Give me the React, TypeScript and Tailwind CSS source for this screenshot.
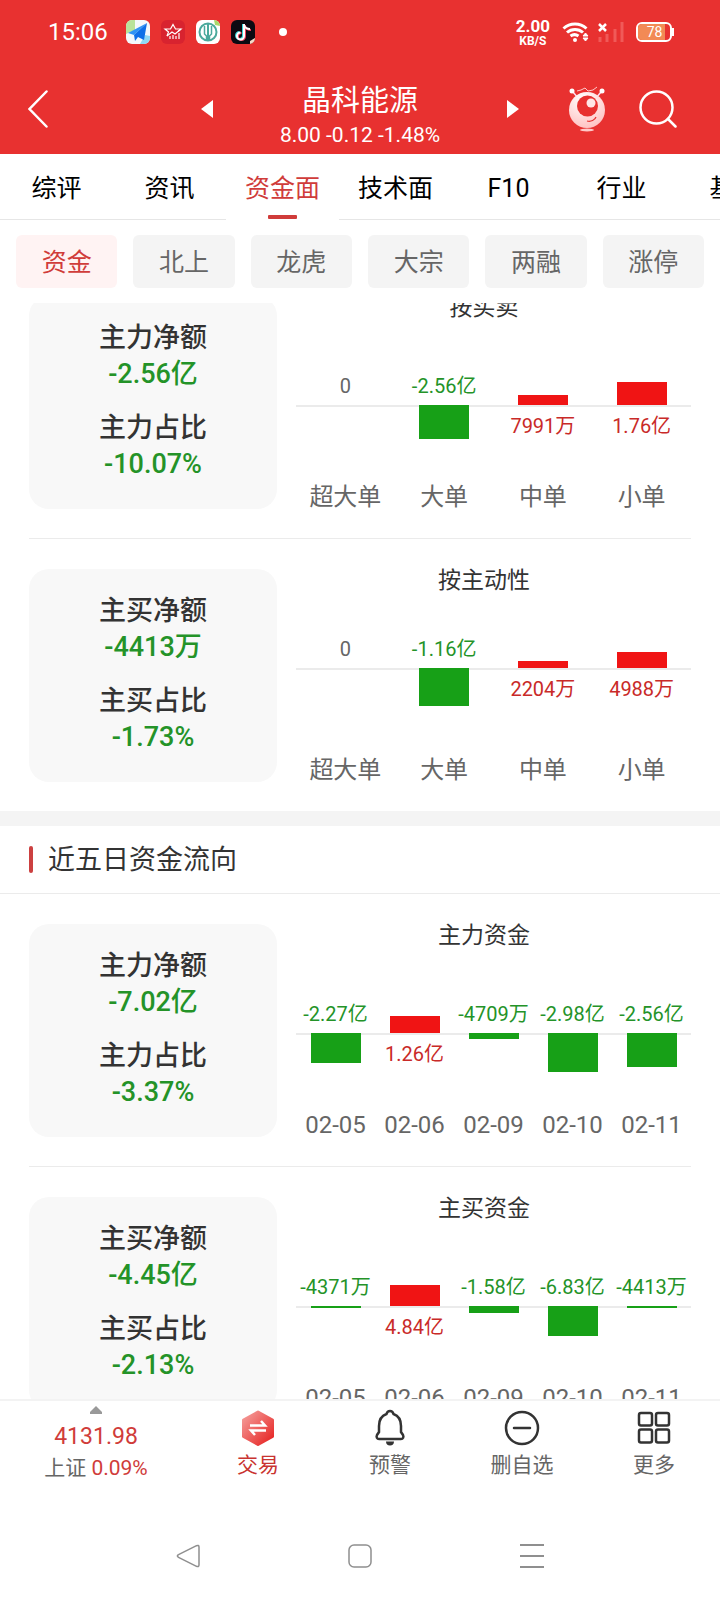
import { ReactNode } from "react";
import clsx from "clsx";

type Bar = { label: string; value: string; height: number; dir: "up" | "down" | "none" };

type Flow = {
	netLabel: string;
	net: string;
	ratioLabel: string;
	ratio: string;
	title: string;
	axis: "high" | "low";
	bars: Bar[];
};

const tabs = ["综评", "资讯", "资金面", "技术面", "F10", "行业", "基金"];
const chips = ["资金", "北上", "龙虎", "大宗", "两融", "涨停"];

const today: Flow[] = [
	{
		netLabel: "主力净额",
		net: "-2.56亿",
		ratioLabel: "主力占比",
		ratio: "-10.07%",
		title: "按买卖",
		axis: "low",
		bars: [
			{ label: "超大单", value: "0", height: 0, dir: "none" },
			{ label: "大单", value: "-2.56亿", height: 34, dir: "down" },
			{ label: "中单", value: "7991万", height: 10, dir: "up" },
			{ label: "小单", value: "1.76亿", height: 23, dir: "up" },
		],
	},
	{
		netLabel: "主买净额",
		net: "-4413万",
		ratioLabel: "主买占比",
		ratio: "-1.73%",
		title: "按主动性",
		axis: "high",
		bars: [
			{ label: "超大单", value: "0", height: 0, dir: "none" },
			{ label: "大单", value: "-1.16亿", height: 38, dir: "down" },
			{ label: "中单", value: "2204万", height: 7, dir: "up" },
			{ label: "小单", value: "4988万", height: 16, dir: "up" },
		],
	},
];

const fiveDays: Flow[] = [
	{
		netLabel: "主力净额",
		net: "-7.02亿",
		ratioLabel: "主力占比",
		ratio: "-3.37%",
		title: "主力资金",
		axis: "low",
		bars: [
			{ label: "02-05", value: "-2.27亿", height: 30, dir: "down" },
			{ label: "02-06", value: "1.26亿", height: 17, dir: "up" },
			{ label: "02-09", value: "-4709万", height: 6, dir: "down" },
			{ label: "02-10", value: "-2.98亿", height: 39, dir: "down" },
			{ label: "02-11", value: "-2.56亿", height: 34, dir: "down" },
		],
	},
	{
		netLabel: "主买净额",
		net: "-4.45亿",
		ratioLabel: "主买占比",
		ratio: "-2.13%",
		title: "主买资金",
		axis: "low",
		bars: [
			{ label: "02-05", value: "-4371万", height: 2, dir: "down" },
			{ label: "02-06", value: "4.84亿", height: 21, dir: "up" },
			{ label: "02-09", value: "-1.58亿", height: 7, dir: "down" },
			{ label: "02-10", value: "-6.83亿", height: 30, dir: "down" },
			{ label: "02-11", value: "-4413万", height: 2, dir: "down" },
		],
	},
];

function AppIcons() {
	return (
		<div className="flex gap-[11px]">
			{/* 地图 */}
			<svg className="size-6" viewBox="0 0 24 24">
				<rect width="24" height="24" rx="6" fill="#f4f8fb" />
				<path d="M6 0h3v10L0 14V6a6 6 0 0 1 6-6z" fill="#b9e39a" />
				<path d="M14 24l5-9 5 1v2a6 6 0 0 1-6 6z" fill="#8fd8f5" />
				<path d="M21 3L2 13l6 2z" fill="#2f93f5" />
				<path d="M21 3L8 15l1 6 3-4 6 3z" fill="#0f6fe8" />
			</svg>
			{/* 券商 */}
			<svg className="size-6" viewBox="0 0 24 24" fill="none" stroke="#fff" strokeWidth="1.2">
				<rect width="24" height="24" rx="6" fill="#d8232f" stroke="none" />
				<path d="M6 16l1.500-4L4 9h5.500L12 4.500 14.500 9H20l-3 2.500" />
				<path d="M6 16l5-4 3 2 6-5M9 19v-3M12 19v-4M15 19v-3M18 19v-6" />
			</svg>
			{/* 银行 */}
			<svg className="size-6" viewBox="0 0 24 24" fill="none" stroke="#4ba99c">
				<rect width="24" height="24" rx="6" fill="#fff" stroke="none" />
				<path d="M18 0a6 6 0 0 1 6 6l-5-1z" fill="#a8d86a" stroke="none" />
				<circle cx="12" cy="12" r="8.500" strokeWidth="2" />
				<path d="M12 4v16" strokeWidth="2" />
				<path d="M8.500 6v8l2 2v4M15.500 6v8l-2 2v4" strokeWidth="1.500" />
			</svg>
			{/* 短视频 */}
			<svg className="size-6" viewBox="0 0 24 24" fill="none" strokeWidth="2">
				<rect width="24" height="24" rx="6" fill="#0c0a12" />
				<path d="M12 4v11.500a3.500 3.500 0 1 1-3.500-3.500M12 5c1 3 3 4 6 4" stroke="#35d6d8" />
				<path d="M14 5v11.500a3.500 3.500 0 1 1-3.500-3.500M14 6c1 3 3 4 6 4" stroke="#f0405c" />
				<path d="M13 4v12a3.500 3.500 0 1 1-3.500-3.500M13 5c1 3 3 4 6 4" stroke="#fff" />
				<path d="M19 21l5-3a6 6 0 0 1-5 6z" fill="#f6d9c8" />
			</svg>
		</div>
	);
}

function StatusBar() {
	return (
		<div className="flex h-16 items-center pr-[46px] pl-12">
			<span className="w-[78px] text-[24px] leading-8">15:06</span>
			<AppIcons />
			<span className="ml-6 size-2 rounded-full bg-white" />
			<div className="ml-auto flex items-center">
				<div className="mr-3 text-center font-bold">
					<p className="text-[17px] leading-[17px]">2.00</p>
					<p className="text-[12px] leading-[12px]">KB/S</p>
				</div>
				{/* wifi */}
				<svg className="mr-2 h-6 w-7" viewBox="0 0 28 24" fill="none" stroke="#fff" strokeWidth="3">
					<path d="M1.500 8.500a17 17 0 0 1 23 0M5 12.500a12 12 0 0 1 16 0M8.500 16a7 7 0 0 1 8 0" />
					<circle cx="13" cy="20" r="2" fill="#fff" stroke="none" />
					<path d="M21 16l2.500-3 2.500 3zM21 18l2.500 3 2.500-3z" fill="#fff" strokeWidth="1" />
				</svg>
				{/* 无信号 */}
				<svg className="mr-3 h-6 w-[26px]" viewBox="0 0 26 24" fill="none">
					<path d="M1 4l7 7M8 4l-7 7" stroke="#fff" strokeWidth="2.500" />
					<path d="M2 22v-5M9 22v-8M17 22V9M24 22V2" stroke="#f05a58" strokeWidth="3" />
				</svg>
				{/* 电量 */}
				<div className="flex items-center">
					<div className="flex h-5 w-9 rounded-[6px] border-2 border-white">
						<span className="flex w-[27px] items-center justify-center rounded-l-[4px] bg-[#f28a55] pl-1.5 text-[14px] leading-4">78</span>
					</div>
					<span className="h-2 w-0.5 bg-white" />
				</div>
			</div>
		</div>
	);
}

function Mascot() {
	return (
		<svg className="h-12 w-[42px]" viewBox="0 0 42 48" fill="none">
			<defs>
				<radialGradient id="head" cx="0.4" cy="0.2" r="0.9">
					<stop offset="0" stopColor="#fff" />
					<stop offset="1" stopColor="#ffbcbc" />
				</radialGradient>
			</defs>
			<path d="M7 7l5 6M35 7l-5 6" stroke="#fde" strokeWidth="1.500" />
			<circle cx="6" cy="6" r="2.500" fill="#fff" />
			<circle cx="36" cy="6" r="2.500" fill="#fff" />
			<path d="M11 6l4-1 4-2 3 3 5-1 4-3" stroke="#ffc9c9" />
			<circle cx="21" cy="25" r="18" fill="url(#head)" />
			<circle cx="21.500" cy="21" r="10.500" fill="#e83130" />
			<circle cx="25" cy="18" r="4.500" fill="#ffe6e6" />
			<path d="M21 36c4 1 8-1 9-4" stroke="#e83130" strokeWidth="1.200" />
			<ellipse cx="21" cy="45" rx="7" ry="1.500" fill="#ffc9c9" />
		</svg>
	);
}

function StockHeader() {
	return (
		<div className="grid h-[90px] grid-cols-[1fr_294px_1fr] items-center">
			<div className="flex items-center justify-between pl-7">
				<button aria-label="返回">
					<svg className="h-10 w-5" viewBox="0 0 20 40" fill="none" stroke="#fff" strokeWidth="2.500" strokeLinecap="round">
						<path d="M18.500 2.500L1.500 20l17 17.500" />
					</svg>
				</button>
				<button aria-label="上一只">
					<svg className="h-[18px] w-3" viewBox="0 0 12 18" fill="#fff">
						<path d="M12 0v18L0 9z" />
					</svg>
				</button>
			</div>
			<div className="pt-4 text-center">
				<h1 className="text-[29px] leading-9">晶科能源</h1>
				<p className="text-[21px] leading-8">8.00 -0.12 -1.48%</p>
			</div>
			<div className="flex items-center pr-[43px]">
				<button aria-label="下一只" className="mr-auto">
					<svg className="h-[18px] w-3" viewBox="0 0 12 18" fill="#fff">
						<path d="M0 0v18l12-9z" />
					</svg>
				</button>
				<button aria-label="助手" className="mr-[31px]">
					<Mascot />
				</button>
				<button aria-label="搜索">
					<svg className="size-[38px]" viewBox="0 0 38 38" fill="none" stroke="#fff" strokeWidth="2.500" strokeLinecap="round">
						<circle cx="17.500" cy="17.500" r="16" />
						<path d="M29 29l7.500 7.500" />
					</svg>
				</button>
			</div>
		</div>
	);
}

function Summary({ flow }: { flow: Flow }) {
	return (
		<div className="w-[248px] shrink-0 rounded-[20px] bg-[#f8f8f8] pt-6 pb-[27px] text-center text-[27px] leading-9 font-medium text-[#333]">
			<p>{flow.netLabel}</p>
			<p className="mb-[18px] text-[#249328]">{flow.net}</p>
			<p>{flow.ratioLabel}</p>
			<p className="text-[#249328]">{flow.ratio}</p>
		</div>
	);
}

function Chart({ flow }: { flow: Flow }) {
	return (
		<div className="flex flex-1 flex-col">
			<h3 className="text-center text-[23px] leading-6 text-[#333]">{flow.title}</h3>
			<div className="relative ml-[19px] flex flex-1">
				{/* 零轴 */}
				<div className={clsx("absolute inset-x-0 h-0.5 bg-[#ebebeb]", flow.axis === "low" ? "top-[85px]" : "top-[75px]")} />
				{flow.bars.map((bar) => (
					<div key={bar.label} className="relative flex w-0 flex-1 flex-col items-center text-[20px] leading-6 whitespace-nowrap">
						<div className={clsx("flex flex-col justify-end", flow.axis === "low" ? "h-[85px]" : "h-[75px]")}>
							{bar.dir === "up" ? (
								<div className="w-[50px] bg-[#f01414]" style={{ height: bar.height }} />
							) : (
								<p className={clsx("pb-[7px]", bar.dir === "none" ? "text-[#666]" : "text-[#249328]")}>{bar.value}</p>
							)}
						</div>
						<div className="flex-1">
							{bar.dir === "down" && <div className="w-[50px] bg-[#17a017]" style={{ height: bar.height }} />}
							{bar.dir === "up" && <p className="pt-[9px] text-[#c92a28]">{bar.value}</p>}
						</div>
						<p className="text-[24px] text-[#666]">{bar.label}</p>
					</div>
				))}
			</div>
		</div>
	);
}

function FlowList({ flows }: { flows: Flow[] }) {
	return (
		<div className="mx-[29px]">
			{flows.map((flow) => (
				<section key={flow.title} className="flex border-b border-[#ebebeb] pt-[30px] pb-[29px] last:border-0">
					<Summary flow={flow} />
					<Chart flow={flow} />
				</section>
			))}
		</div>
	);
}

function Action({ label, red, children }: { label: string; red?: boolean; children: ReactNode }) {
	return (
		<button className={clsx("flex flex-1 flex-col items-center gap-px pt-[7px] text-[21px] leading-8", red ? "text-[#c93330]" : "text-[#666]")}>
			<svg className="size-10" viewBox="0 0 40 40" fill="none" stroke="#333" strokeWidth="2.500">
				{children}
			</svg>
			{label}
		</button>
	);
}

function BottomBar() {
	return (
		<div className="flex h-[104px] border-t-2 border-[#f3f3f3]">
			<button className="flex w-[192px] flex-col items-center pt-[5px] text-[#d03c3a]">
				<svg className="h-2 w-3" viewBox="0 0 12 8" fill="#999">
					<path d="M6 0l6 6v2H0V6z" />
				</svg>
				<span className="mt-2 text-[23px] leading-[30px]">4131.98</span>
				<span className="text-[21px] leading-8">
					<span className="text-[#666]">上证</span> 0.09%
				</span>
			</button>
			<Action label="交易" red>
				<defs>
					<linearGradient id="hex" x1="0" y1="0" x2="1" y2="1">
						<stop offset="0" stopColor="#f5a09d" />
						<stop offset="1" stopColor="#e6201f" />
					</linearGradient>
				</defs>
				<path d="M20 4l14.500 8v16.500L20 36.500 5.500 28.500V12z" fill="url(#hex)" stroke="url(#hex)" strokeWidth="3" strokeLinejoin="round" />
				<path d="M12 17.500h15l-4-4.500M28 22.500H13l4 4.500" stroke="#fff" strokeWidth="2.500" />
			</Action>
			<Action label="预警">
				<path d="M20 3c-2 0-3 1.200-3.500 3C11 8 9 13 9 18v6l-2 3c-1 2 0 4 2 4h22c2 0 3-2 2-4l-2-3v-6c0-5-2-10-7.500-12C23 4.200 22 3 20 3z" />
				<path d="M16 33.500h8c0 2.500-1.500 4-4 4s-4-1.500-4-4z" fill="#333" stroke="none" />
			</Action>
			<Action label="删自选">
				<circle cx="20" cy="20" r="16" />
				<path d="M12 20h16" strokeLinecap="round" />
			</Action>
			<Action label="更多">
				<rect x="5" y="5" width="13" height="12.500" rx="2" />
				<rect x="22" y="5" width="13" height="12.500" rx="2" />
				<rect x="5" y="21.500" width="13" height="13" rx="2" />
				<rect x="22" y="21.500" width="13" height="13" rx="2" />
			</Action>
		</div>
	);
}

function SystemNav() {
	return (
		<div className="flex h-[97px] items-center justify-center gap-[148px] pt-[9px]">
			<button aria-label="后退">
				<svg className="size-6" viewBox="0 0 24 24" fill="none" stroke="#8f8f8f" strokeWidth="1.500" strokeLinejoin="round">
					<path d="M23 3v18c0 1.500-1 2-2.500 1.300l-18-9c-1.500-.7-1.500-1.900 0-2.600l18-9C22 1 23 1.500 23 3z" />
				</svg>
			</button>
			<button aria-label="主页">
				<svg className="size-6" viewBox="0 0 24 24" fill="none" stroke="#8f8f8f" strokeWidth="1.500">
					<rect x="1" y="1" width="22" height="22" rx="5" />
				</svg>
			</button>
			<button aria-label="最近任务">
				<svg className="size-6" viewBox="0 0 24 24" fill="none" stroke="#8f8f8f" strokeWidth="2">
					<path d="M0 1h24M0 12h24M0 23h24" />
				</svg>
			</button>
		</div>
	);
}

export default function App() {
	return (
		<div className="flex h-screen flex-col bg-white font-[Roboto,'Noto_Sans_CJK_SC',sans-serif]">
			<header className="shrink-0 bg-[#e83130] text-white">
				<StatusBar />
				<StockHeader />
			</header>

			{/* 一级标签 */}
			<nav className="flex h-[66px] shrink-0 overflow-hidden">
				{tabs.map((tab) => {
					const active = tab === "资金面";
					return (
						<button
							key={tab}
							className={clsx(
								"flex w-[113px] shrink-0 flex-col items-center justify-between border-b pt-[19px] text-[25px] leading-8",
								active ? "border-transparent text-[#d03c3a]" : "border-[#e6e6e6] text-black",
							)}
						>
							{tab}
							{active && <span className="h-1 w-[29px] rounded-[1px] bg-[#d03c3a]" />}
						</button>
					);
				})}
			</nav>

			{/* 二级标签 */}
			<nav className="flex shrink-0 gap-4 px-4 py-[15px]">
				{chips.map((chip, i) => (
					<button
						key={chip}
						className={clsx(
							"h-[53px] flex-1 rounded-[6px] pt-0.5 text-[25px] leading-8",
							i === 0 ? "bg-[#fff3f3] text-[#d03c3a]" : "bg-[#f4f4f4] text-[#666]",
						)}
					>
						{chip}
					</button>
				))}
			</nav>

			<main className="min-h-0 flex-1 overflow-hidden">
				<div className="-mt-[37px]">
					<FlowList flows={today} />
					<div className="h-[15px] bg-[#f4f4f4]" />
					<h2 className="flex h-[68px] items-center gap-[15px] border-b border-[#ebebeb] pl-[29px] text-[27px] leading-9 text-[#333]">
						<span className="h-[27px] w-1 rounded-[2px] bg-[#cc4040]" />
						近五日资金流向
					</h2>
					<FlowList flows={fiveDays} />
				</div>
			</main>

			<footer className="shrink-0">
				<BottomBar />
				<SystemNav />
			</footer>
		</div>
	);
}
